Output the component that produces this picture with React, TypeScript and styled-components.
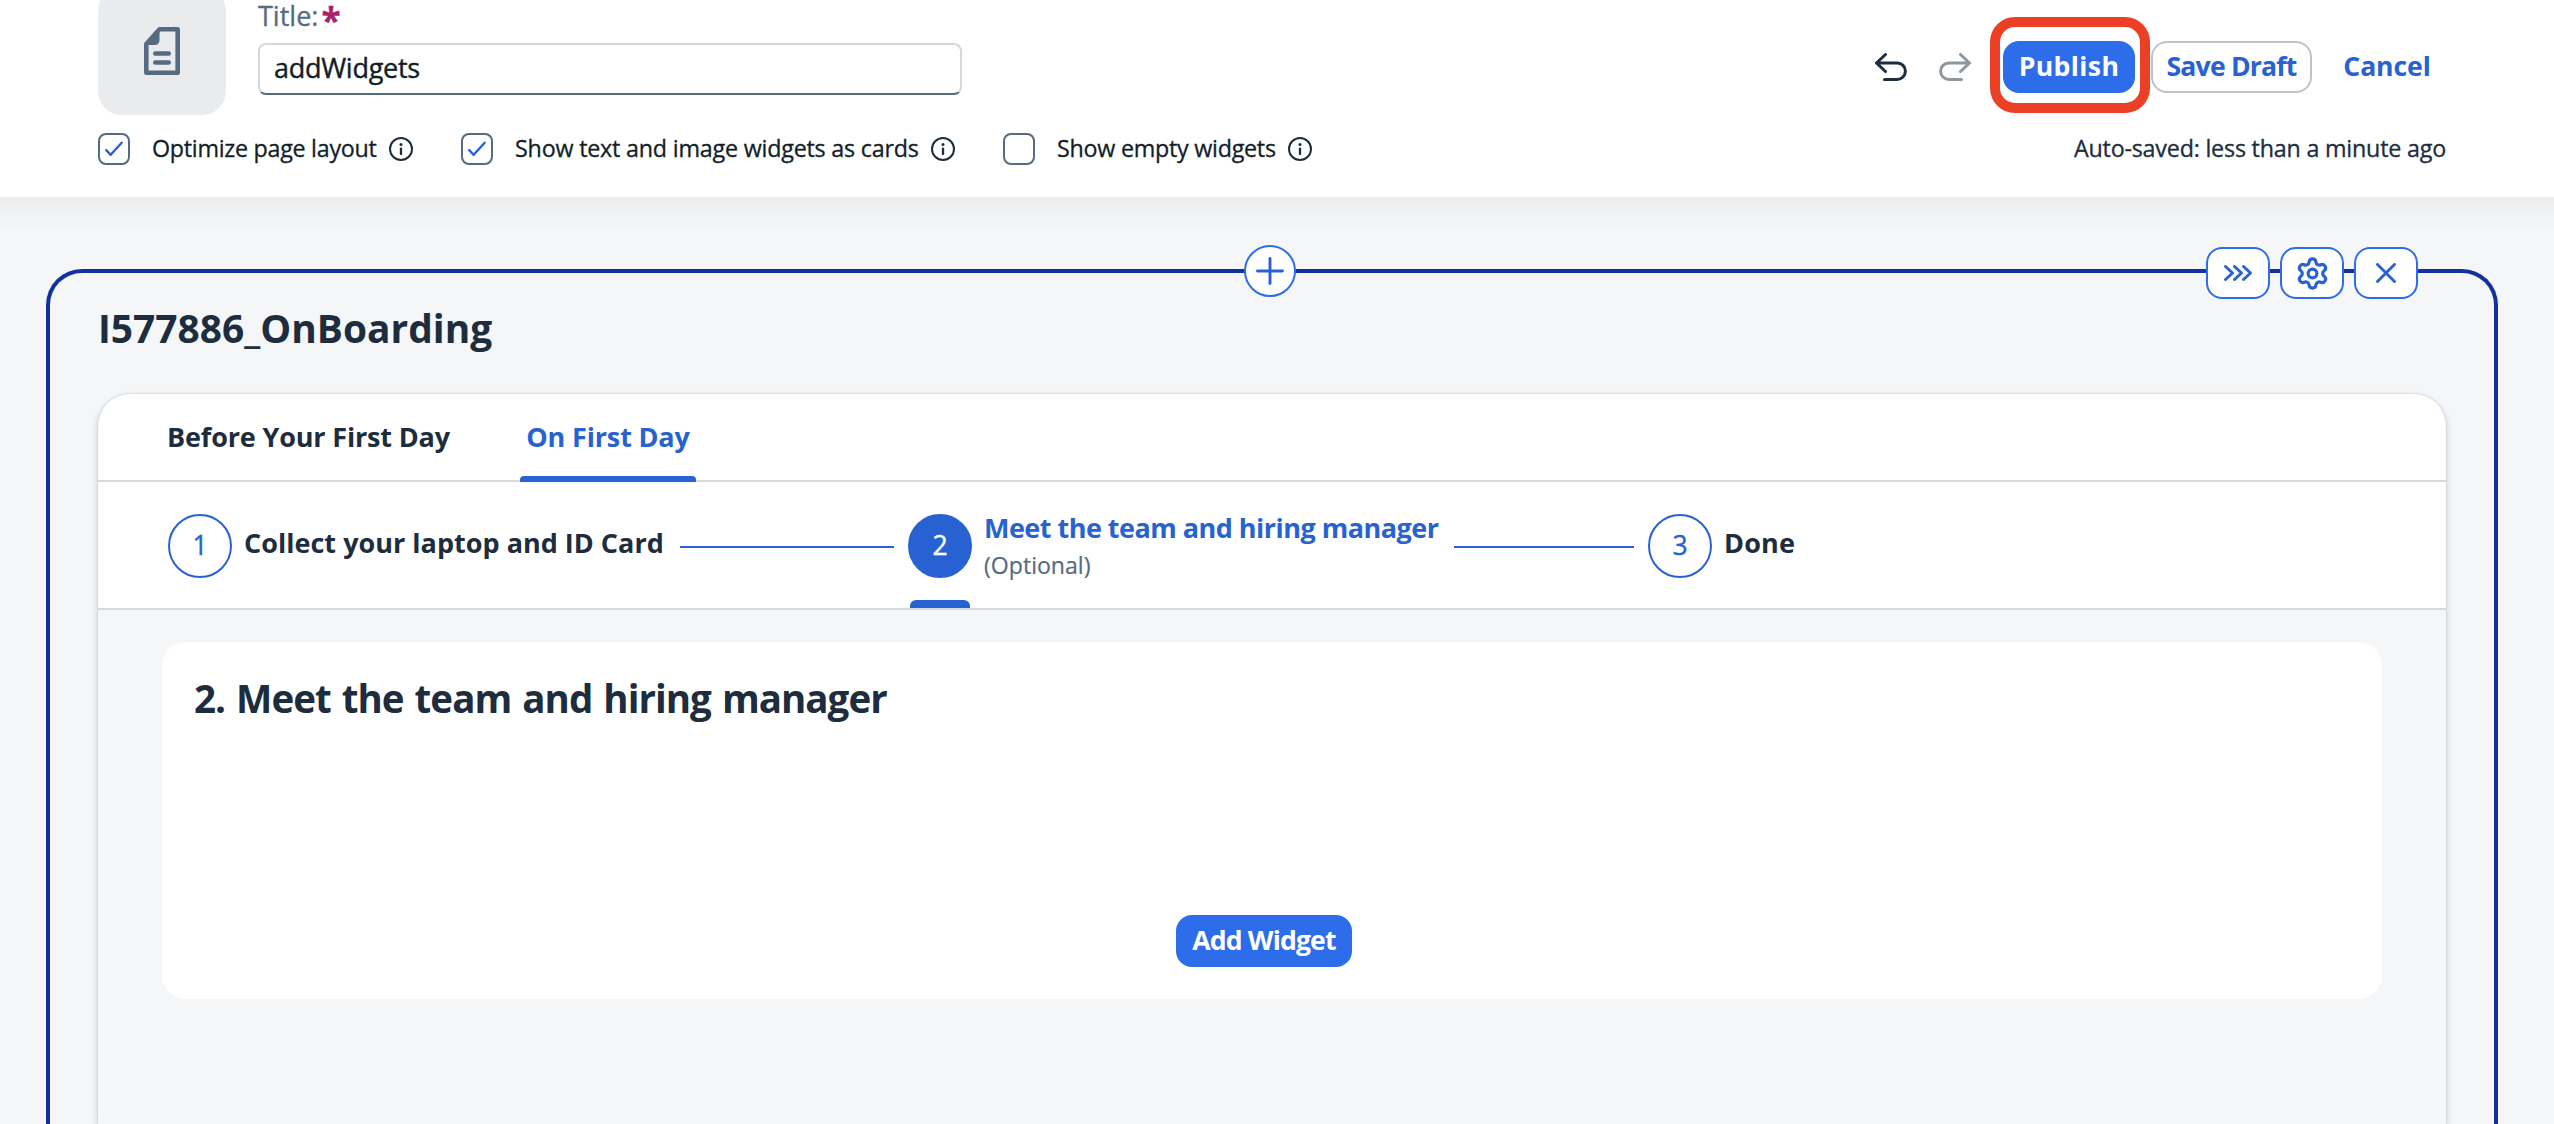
import React from "react";
import styled, { createGlobalStyle, css } from "styled-components";
import { Settings } from "lucide-react";

const c = {
  ink: "#1d2d3e",
  black: "#131e29",
  muted: "#556b82",
  link: "#2862d2",
  accent: "#2e6dea",
  frame: "#1131a0",
  bg: "#f4f6f8",
  line: "#d9d9d9",
  red: "#eb4026",
};

const GlobalStyle = createGlobalStyle`
  * { box-sizing: border-box; }
  body { margin: 0; background: ${c.bg}; }
  body, button, input { font-family: "Open Sans", "Noto Sans", sans-serif; }
`;

const Page = styled.div`
  display: flex;
  flex-direction: column;
  height: 1124px;
  overflow: hidden;
  background: ${c.bg};
  color: ${c.ink};
`;

const Header = styled.header`
  flex: none;
  height: 197px;
  padding: 0 108px 0 98px;
  background: #fff;
`;

const HeaderShade = styled.div`
  flex: none;
  height: 32px;
  margin-bottom: 40px;
  background: linear-gradient(#ececed, #f1f2f4 55%, #f3f5f6);
`;

const TopRow = styled.div`
  display: flex;
  height: 133px;
`;

const Tile = styled.div`
  display: flex;
  align-items: center;
  justify-content: center;
  width: 128px;
  height: 128px;
  margin: -13px 32px 0 0;
  border-radius: 24px;
  background: #eaebed;
`;

const TitleField = styled.label`
  width: 704px;
`;

const FieldLabel = styled.span`
  display: flex;
  gap: 4px;
  height: 31px;
  margin-bottom: 12px;
  font-size: 27px;
  line-height: 31px;
  -webkit-text-stroke: 0.3px;
  color: ${c.muted};
`;

const Required = styled.b`
  margin-left: -1px;
  font-size: 35px;
  line-height: 39px;
  color: #aa2069;
`;

const TitleInput = styled.input`
  display: block;
  width: 100%;
  height: 52px;
  padding: 0 14px 3px;
  border: 2px solid #d2d8de;
  border-bottom-color: ${c.muted};
  border-radius: 8px;
  background: #fff;
  font-size: 27px;
  letter-spacing: -0.28px;
  -webkit-text-stroke: 0.4px;
  color: ${c.black};
  outline: none;
`;

const Actions = styled.div`
  display: flex;
  gap: 16px;
  height: 52px;
  margin: 41px 0 0 auto;
`;

const History = styled.div`
  display: flex;
`;

const IconButton = styled.button`
  display: flex;
  align-items: center;
  justify-content: center;
  width: 64px;
  height: 52px;
  padding: 0;
  border: 0;
  background: none;
  color: ${c.ink};

  &:disabled {
    color: #8e969f;
  }
`;

const Button = styled.button<{ $kind: "primary" | "outline" | "plain"; $width: number; $tracking?: number }>`
  width: ${(p) => p.$width}px;
  height: 52px;
  padding: 0 0 1px;
  border: 2px solid transparent;
  border-radius: 16px;
  background: none;
  font-size: 26.6px;
  font-weight: 700;
  letter-spacing: ${(p) => p.$tracking ?? 0}px;
  line-height: 45px;
  white-space: nowrap;
  color: ${c.link};
  ${(p) => p.$kind === "outline" && css`border-color: #bcc3ca;`}
  ${(p) =>
    p.$kind === "primary" &&
    css`
      border-color: ${c.accent};
      background: ${c.accent};
      color: #fff;
    `}
`;

const Highlight = styled.div`
  position: relative;

  &::after {
    content: "";
    position: absolute;
    inset: -24px -15px -20px -13px;
    border: 10px solid ${c.red};
    border-radius: 25px;
    pointer-events: none;
  }
`;

const OptionsRow = styled.div`
  display: flex;
  align-items: center;
  gap: 48px;
  height: 32px;
  font-size: 23.3px;
  line-height: 30px;
  -webkit-text-stroke: 0.3px;
`;

const Option = styled.label<{ $width: number }>`
  display: flex;
  align-items: center;
  width: ${(p) => p.$width}px;
  color: ${c.black};
`;

const CheckBox = styled.span`
  display: flex;
  width: 32px;
  height: 32px;
  margin-right: 22px;
  border: 2px solid ${c.muted};
  border-radius: 8px;
  background: #fff;
`;

const OptionText = styled.span<{ $tracking: number }>`
  flex: 1;
  padding-bottom: 2px;
  letter-spacing: ${(p) => p.$tracking}px;
  white-space: nowrap;
`;

const SavedNote = styled.span`
  margin-left: auto;
  padding-bottom: 2px;
  letter-spacing: -0.21px;
`;

const Section = styled.section`
  position: relative;
  flex: 1;
  display: flex;
  flex-direction: column;
  margin: 0 56px 0 46px;
  padding: 25px 48px 0;
  border: 4px solid ${c.frame};
  border-bottom: 0;
  border-radius: 36px 36px 0 0;
`;

const AddAbove = styled.button`
  position: absolute;
  top: -28px;
  left: 1194px;
  display: flex;
  align-items: center;
  justify-content: center;
  width: 52px;
  height: 52px;
  padding: 0;
  border: 2px solid ${c.accent};
  border-radius: 50%;
  background: #fff;
  color: ${c.link};
`;

const SectionTools = styled.div`
  position: absolute;
  top: -26px;
  right: 76px;
  display: flex;
  gap: 10px;
`;

const ToolButton = styled.button`
  display: flex;
  align-items: center;
  justify-content: center;
  width: 64px;
  height: 52px;
  padding: 0;
  border: 2px solid ${c.accent};
  border-radius: 16px;
  background: #fff;
  color: ${c.link};
`;

const SectionTitle = styled.h2`
  margin: 0 0 36px;
  font-size: 38.9px;
  font-weight: 700;
  line-height: 60px;
`;

const Panel = styled.div`
  flex: 1;
  display: flex;
  flex-direction: column;
  border-radius: 32px 32px 0 0;
  background: #fff;
  box-shadow: 0 0 2px rgba(34, 53, 72, 0.3), 0 4px 8px rgba(34, 53, 72, 0.16);
`;

const Tabs = styled.nav`
  display: flex;
  gap: 65px;
  height: 88px;
  padding-left: 64px;
  box-shadow: inset 0 -2px ${c.line};
`;

const Tab = styled.div<{ $width: number; $active?: boolean }>`
  width: ${(p) => p.$width}px;
  padding-top: 4px;
  font-size: 27px;
  font-weight: 700;
  letter-spacing: -0.16px;
  line-height: 78px;
  text-align: center;
  white-space: nowrap;
  color: ${(p) => (p.$active ? c.link : c.ink)};

  &::after {
    content: "";
    display: block;
    height: 6px;
    border-radius: 4px 4px 0 0;
    background: ${(p) => (p.$active ? c.link : "transparent")};
  }
`;

const Steps = styled.ol`
  display: grid;
  grid-template-columns: 740px 740px auto;
  height: 128px;
  margin: 0;
  padding: 0 0 0 70px;
  border-bottom: 2px solid ${c.line};
  list-style: none;
`;

const Step = styled.li`
  display: flex;
  align-items: center;
  padding-top: 2px;
`;

const StepNumber = styled.span<{ $active?: boolean }>`
  position: relative;
  flex: none;
  width: 64px;
  height: 64px;
  border: 2px solid ${c.link};
  border-radius: 50%;
  background: ${(p) => (p.$active ? c.link : "#fff")};
  font-size: 26.5px;
  line-height: 58px;
  text-align: center;
  -webkit-text-stroke: 0.4px;
  color: ${(p) => (p.$active ? "#fff" : c.link)};

  ${(p) =>
    p.$active &&
    css`
      &::after {
        content: "";
        position: absolute;
        top: 84px;
        left: 0;
        width: 60px;
        height: 8px;
        border-radius: 6px 6px 0 0;
        background: ${c.link};
      }
    `}
`;

const StepLabel = styled.div<{ $active?: boolean; $single?: boolean; $tracking?: number }>`
  flex: none;
  margin: 0 16px 0 12px;
  padding-bottom: ${(p) => (p.$single ? 8 : 0)}px;
  font-size: 27px;
  font-weight: 700;
  letter-spacing: ${(p) => p.$tracking ?? 0}px;
  line-height: 37px;
  white-space: nowrap;
  color: ${(p) => (p.$active ? c.link : c.ink)};
`;

const StepHint = styled.div`
  font-size: 23.1px;
  font-weight: 400;
  letter-spacing: 0;
  line-height: 38px;
  -webkit-text-stroke: 0.2px;
  color: ${c.muted};
`;

const StepLine = styled.span`
  flex: 1;
  height: 2px;
  margin: 2px 14px 0 0;
  background: ${c.link};
`;

const PanelBody = styled.div`
  flex: 1;
  padding: 32px 64px 0;
  background: ${c.bg};
`;

const Card = styled.article`
  display: flex;
  flex-direction: column;
  justify-content: space-between;
  align-items: center;
  height: 357px;
  padding: 25px 48px 32px 32px;
  border-radius: 24px;
  background: #fff;
`;

const CardTitle = styled.h3`
  align-self: flex-start;
  margin: 0;
  padding-top: 1px;
  font-size: 38.5px;
  font-weight: 700;
  letter-spacing: -0.97px;
  line-height: 60px;
  word-spacing: 2px;
`;

const DocumentIcon = () => (
  <svg width="36" height="48" viewBox="0 0 36 48" fill="none" stroke={c.muted} strokeWidth="4.6">
    <path d="M15.5 2.3H33.7V45.7H2.3V17Z" strokeLinejoin="round" />
    <path d="M15.5 1.5V13Q15.5 18 10.5 18H2L2 16Z" fill={c.muted} stroke="none" />
    <path d="M11.3 26.5H24.7M11.3 35.5H24.7" strokeLinecap="round" />
  </svg>
);

const UndoIcon = ({ flip }: { flip?: boolean }) => (
  <svg width="32" height="28" viewBox="0 0 32 28" fill="none" stroke="currentColor" strokeWidth="3" strokeLinecap="round" strokeLinejoin="round">
    <g transform={flip ? "translate(32 0) scale(-1 1)" : undefined}>
      <path d="M10.5 1.5L1.5 10L10.5 18.5M2 10H22.2A8.2 8.2 0 0 1 22.2 26.4H9.5" />
    </g>
  </svg>
);

const CheckIcon = () => (
  <svg width="28" height="28" viewBox="2 2 28 28" fill="none" stroke={c.link} strokeWidth="2.4" strokeLinecap="round" strokeLinejoin="round">
    <path d="M8.2 17.2L12.7 21.8L23.7 9.8" />
  </svg>
);

const InfoIcon = () => (
  <svg width="24" height="24" viewBox="0 0 24 24" fill="none" stroke={c.ink} strokeWidth="2" strokeLinecap="round">
    <circle cx="12" cy="12" r="11" />
    <path d="M12 11.6V17" strokeWidth="2.3" />
    <circle cx="12" cy="7.4" r="1.5" fill={c.ink} stroke="none" />
  </svg>
);

const StrokeIcon = ({ d, w, h }: { d: string; w: number; h: number }) => (
  <svg width={w} height={h} viewBox={`0 0 ${w} ${h}`} fill="none" stroke="currentColor" strokeWidth="2.9" strokeLinecap="round" strokeLinejoin="round">
    <path d={d} />
  </svg>
);

const options = [
  { text: "Optimize page layout", width: 315, tracking: -0.28, checked: true },
  { text: "Show text and image widgets as cards", width: 494, tracking: -0.21, checked: true },
  { text: "Show empty widgets", width: 309, tracking: -0.26, checked: false },
];

export default function App() {
  return (
    <Page>
      <GlobalStyle />
      <Header>
        <TopRow>
          <Tile>
            <DocumentIcon />
          </Tile>
          <TitleField>
            <FieldLabel>
              Title:<Required>*</Required>
            </FieldLabel>
            <TitleInput defaultValue="addWidgets" />
          </TitleField>
          <Actions>
            <History>
              <IconButton aria-label="Undo">
                <UndoIcon />
              </IconButton>
              <IconButton aria-label="Redo" disabled>
                <UndoIcon flip />
              </IconButton>
            </History>
            <Highlight>
              <Button $kind="primary" $width={132} $tracking={0.4}>Publish</Button>
            </Highlight>
            <Button $kind="outline" $width={161} $tracking={-0.8}>Save Draft</Button>
            <Button $kind="plain" $width={118} $tracking={-0.1}>Cancel</Button>
          </Actions>
        </TopRow>
        <OptionsRow>
          {options.map((o) => (
            <Option key={o.text} $width={o.width}>
              <CheckBox>{o.checked && <CheckIcon />}</CheckBox>
              <OptionText $tracking={o.tracking}>{o.text}</OptionText>
              <InfoIcon />
            </Option>
          ))}
          <SavedNote>Auto-saved: less than a minute ago</SavedNote>
        </OptionsRow>
      </Header>
      <HeaderShade />

      <Section>
        <AddAbove aria-label="Add section">
          <StrokeIcon w={28} h={28} d="M14 1.5V26.5M1.5 14H26.5" />
        </AddAbove>
        <SectionTools>
          <ToolButton aria-label="Move">
            <StrokeIcon w={28} h={16} d="M1.5 1.5L8.5 8L1.5 14.5M10.5 1.5L17.5 8L10.5 14.5M19.5 1.5L26.5 8L19.5 14.5" />
          </ToolButton>
          <ToolButton aria-label="Settings">
            <Settings size={35} strokeWidth={2.2} />
          </ToolButton>
          <ToolButton aria-label="Remove">
            <StrokeIcon w={20} h={20} d="M1.5 1.5L18.5 18.5M18.5 1.5L1.5 18.5" />
          </ToolButton>
        </SectionTools>

        <SectionTitle>I577886_OnBoarding</SectionTitle>
        <Panel>
          <Tabs>
            <Tab $width={293}>Before Your First Day</Tab>
            <Tab $width={176} $active>On First Day</Tab>
          </Tabs>
          <Steps>
            <Step>
              <StepNumber>1</StepNumber>
              <StepLabel $single $tracking={0.02}>Collect your laptop and ID Card</StepLabel>
              <StepLine />
            </Step>
            <Step>
              <StepNumber $active>2</StepNumber>
              <StepLabel $active $tracking={-0.52}>
                Meet the team and hiring manager
                <StepHint>(Optional)</StepHint>
              </StepLabel>
              <StepLine />
            </Step>
            <Step>
              <StepNumber>3</StepNumber>
              <StepLabel $single $tracking={0.2}>Done</StepLabel>
            </Step>
          </Steps>
          <PanelBody>
            <Card>
              <CardTitle>2. Meet the team and hiring manager</CardTitle>
              <Button $kind="primary" $width={176} $tracking={-0.85}>Add Widget</Button>
            </Card>
          </PanelBody>
        </Panel>
      </Section>
    </Page>
  );
}
